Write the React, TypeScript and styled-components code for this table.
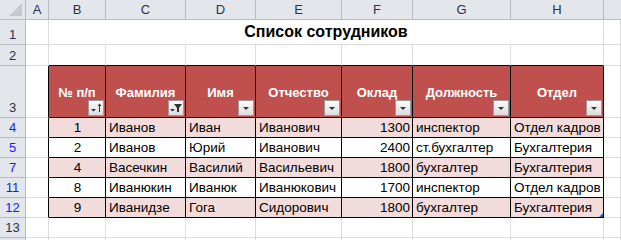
import React from "react"
import styled, { createGlobalStyle } from "styled-components"

const GRID = "#dadcdd"
const HEAD_LINE = "#b7bcc3"
const RED = "#c0504d"
const PINK = "#f2dcdb"

const COLS = [26, 23, 57, 80, 70, 86, 71, 98, 93]
const LETTERS = ["A", "B", "C", "D", "E", "F", "G", "H", ""]

const GlobalStyle = createGlobalStyle`
	html, body {
		margin: 0;
		padding: 0;
		background: #fff;
		overflow: hidden;
	}
	body {
		font-family: "Liberation Sans", Arial, sans-serif;
	}
`

type Row = { n: number; pink: boolean; d: string[] }

const ROWS: Row[] = [
	{ n: 4, pink: true, d: ["1", "Иванов", "Иван", "Иванович", "1300", "инспектор", "Отдел кадров"] },
	{ n: 5, pink: false, d: ["2", "Иванов", "Юрий", "Иванович", "2400", "ст.бухгалтер", "Бухгалтерия"] },
	{ n: 7, pink: true, d: ["4", "Васечкин", "Василий", "Васильевич", "1800", "бухгалтер", "Бухгалтерия"] },
	{ n: 11, pink: false, d: ["8", "Иванюкин", "Иванюк", "Иванюкович", "1700", "инспектор", "Отдел кадров"] },
	{ n: 12, pink: true, d: ["9", "Иванидзе", "Гога", "Сидорович", "1800", "бухгалтер", "Бухгалтерия"] },
]

const HEADERS: { label: string; icon: "sort" | "filter" | "plain" }[] = [
	{ label: "№ п/п", icon: "sort" },
	{ label: "Фамилия", icon: "filter" },
	{ label: "Имя", icon: "plain" },
	{ label: "Отчество", icon: "plain" },
	{ label: "Оклад", icon: "plain" },
	{ label: "Должность", icon: "plain" },
	{ label: "Отдел", icon: "plain" },
]

const ALIGN = ["center", "left", "left", "left", "right", "left", "left"] as const

export default function App() {
	return (
		<>
			<GlobalStyle />
			<Sheet>
				{/* column headers */}
				<Corner>
					<svg width="13" height="13" viewBox="0 0 13 13">
						<polygon points="13,0 13,13 0,13" fill="#c5c9ce" />
					</svg>
				</Corner>
				{LETTERS.map((l, i) => (
					<ColHead key={i} $last={i === LETTERS.length - 1}>
						{l}
					</ColHead>
				))}

				{/* row 1: title */}
				<RowHead>1</RowHead>
				<Cell />
				<Title>Список сотрудников</Title>
				<Cell />

				{/* row 2 */}
				<RowHead>2</RowHead>
				<Cell />
				{HEADERS.map((_, i) => (
					<Cell key={i} $bottom="#000" />
				))}
				<Cell />

				{/* row 3: table header */}
				<RowHead>3</RowHead>
				<Cell $right="#000" />
				{HEADERS.map((h, i) => (
					<HeadCell key={i}>
						{h.label}
						<FilterButton>
							<FilterIcon kind={h.icon} />
						</FilterButton>
					</HeadCell>
				))}
				<Cell />

				{ROWS.map((r, ri) => (
					<React.Fragment key={r.n}>
						<RowHead $filtered>{r.n}</RowHead>
						<Cell $right="#000" />
						{r.d.map((v, i) => (
							<Cell
								key={i}
								$bg={r.pink ? PINK : "#fff"}
								$right="#000"
								$bottom="#000"
								$align={ALIGN[i]}
							>
								{v}
								{ri === ROWS.length - 1 && i === r.d.length - 1 && <ResizeHandle />}
							</Cell>
						))}
						<Cell />
					</React.Fragment>
				))}

				{/* row 13 */}
				<RowHead>13</RowHead>
				{LETTERS.map((_, i) => (
					<Cell key={i} />
				))}

				{/* row 14, cut off */}
				<RowHead />
				{LETTERS.map((_, i) => (
					<Cell key={i} />
				))}
			</Sheet>
		</>
	)
}

function FilterIcon({ kind }: { kind: "sort" | "filter" | "plain" }) {
	if (kind === "sort") {
		return (
			<svg width="14" height="14" viewBox="0 0 14 14">
				<polygon points="2,8 7,8 4.5,10.5" fill="#333" />
				<line x1="10.5" y1="3" x2="10.5" y2="11" stroke="#333" strokeWidth="1" />
				<polygon points="8.5,5 12.5,5 10.5,2.5" fill="#333" />
			</svg>
		)
	}
	if (kind === "filter") {
		return (
			<svg width="14" height="14" viewBox="0 0 14 14">
				<polygon points="1,8 6,8 3.5,10.5" fill="#333" />
				<polygon points="5,3 13,3 10,7 10,11 8,11 8,7" fill="#333" />
			</svg>
		)
	}
	return (
		<svg width="14" height="14" viewBox="0 0 14 14">
			<polygon points="4,6 10,6 7,9" fill="#333" />
		</svg>
	)
}

const Sheet = styled.div`
	display: grid;
	grid-template-columns: ${COLS.map((c) => c + "px").join(" ")} 1fr;
	grid-template-rows: 20px 25px 21px 52px repeat(7, 20px) 1fr;
	width: 621px;
	height: 240px;
	overflow: hidden;
`

const Corner = styled.div`
	box-sizing: border-box;
	background: #e3e6ea;
	border-right: 1px solid ${HEAD_LINE};
	border-bottom: 1px solid ${HEAD_LINE};
	display: flex;
	align-items: flex-end;
	justify-content: flex-end;
	padding: 0 3px 3px 0;
`

const ColHead = styled.div<{ $last?: boolean }>`
	box-sizing: border-box;
	background: #e3e6ea;
	border-right: ${(p) => (p.$last ? "none" : `1px solid ${HEAD_LINE}`)};
	border-bottom: 1px solid ${HEAD_LINE};
	display: flex;
	align-items: center;
	justify-content: center;
	font-size: 13px;
	color: #27344c;
`

const RowHead = styled.div<{ $filtered?: boolean }>`
	box-sizing: border-box;
	background: #e3e6ea;
	border-right: 1px solid ${HEAD_LINE};
	border-bottom: 1px solid ${HEAD_LINE};
	display: flex;
	align-items: flex-end;
	justify-content: center;
	padding-bottom: 2px;
	font-size: 13px;
	color: ${(p) => (p.$filtered ? "#1a1aff" : "#27344c")};
`

const Cell = styled.div<{ $bg?: string; $right?: string; $bottom?: string; $align?: "left" | "center" | "right" }>`
	position: relative;
	box-sizing: border-box;
	background: ${(p) => p.$bg ?? "#fff"};
	border-right: 1px solid ${(p) => p.$right ?? GRID};
	border-bottom: 1px solid ${(p) => p.$bottom ?? GRID};
	display: flex;
	align-items: flex-end;
	justify-content: ${(p) => (p.$align === "center" ? "center" : p.$align === "right" ? "flex-end" : "flex-start")};
	padding: 0 2px 2px 3px;
	font-size: 13.5px;
	color: #000;
	white-space: nowrap;
	overflow: visible;
`

const Title = styled.div`
	grid-column: 3 / 10;
	box-sizing: border-box;
	border-right: 1px solid ${GRID};
	border-bottom: 1px solid ${GRID};
	display: flex;
	align-items: flex-end;
	justify-content: center;
	padding-bottom: 3px;
	font-size: 16px;
	font-weight: bold;
	color: #000;
`

const HeadCell = styled.div`
	position: relative;
	box-sizing: border-box;
	background: ${RED};
	border-right: 1px solid #000;
	border-bottom: 1px solid #000;
	display: flex;
	align-items: center;
	justify-content: center;
	padding-top: 1px;
	font-size: 13px;
	font-weight: bold;
	color: #fff;
	white-space: nowrap;
`

const FilterButton = styled.div`
	position: absolute;
	right: 1px;
	bottom: 1px;
	box-sizing: border-box;
	width: 16px;
	height: 16px;
	border: 1px solid #9a9a9a;
	background: linear-gradient(#fbfbfb, #dcdcdc);
	display: flex;
	align-items: center;
	justify-content: center;
`

const ResizeHandle = styled.div`
	position: absolute;
	right: 0;
	bottom: 0;
	width: 0;
	height: 0;
	border-left: 4px solid transparent;
	border-bottom: 4px solid #2c5cc5;
`
